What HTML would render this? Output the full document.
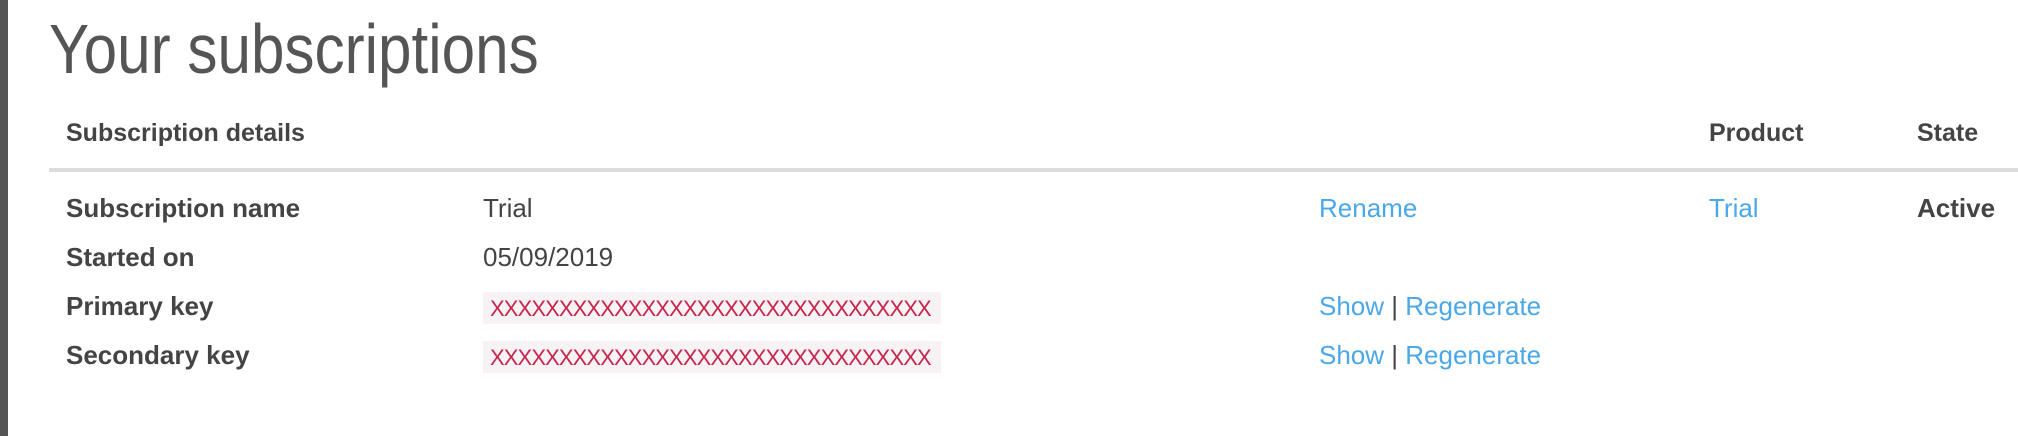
<!DOCTYPE html>
<html><head><meta charset="utf-8"><style>
html,body{margin:0;padding:0;}
body{width:2018px;height:436px;background:#fff;position:relative;overflow:hidden;font-family:"Liberation Sans",sans-serif;color:#444;}
.bar{position:absolute;left:0;top:0;width:8px;height:436px;background:#555;}
.t{position:absolute;white-space:nowrap;line-height:1;}
.title{left:49px;top:14px;font-size:70px;color:#555;transform:scaleX(0.86);transform-origin:0 0;}
.h{font-size:25px;font-weight:bold;color:#444;}
.l{font-size:26px;font-weight:bold;color:#444;}
.v{font-size:26px;color:#444;}
.a{font-size:26px;color:#4aa8e8;}
.line{position:absolute;left:49px;right:0;top:168px;height:4px;background:#ddd;}
.key{position:absolute;left:483px;width:458px;height:32px;background:#f7f2f3;}
.kt{position:absolute;left:490px;font-size:22px;color:#c7254e;letter-spacing:-0.9px;white-space:nowrap;line-height:1;}
.sep{color:#444;}
</style></head><body>
<div class="bar"></div>
<div class="t title">Your subscriptions</div>
<div class="t h" style="left:66px;top:121px">Subscription details</div>
<div class="t h" style="left:1709px;top:121px">Product</div>
<div class="t h" style="left:1917px;top:121px">State</div>
<div class="line"></div>

<div class="t l" style="left:66px;top:195px">Subscription name</div>
<div class="t v" style="left:483px;top:195px">Trial</div>
<div class="t a" style="left:1319px;top:195px">Rename</div>
<div class="t a" style="left:1709px;top:195px">Trial</div>
<div class="t l" style="left:1917px;top:195px">Active</div>

<div class="t l" style="left:66px;top:244px">Started on</div>
<div class="t v" style="left:483px;top:244px">05/09/2019</div>

<div class="key" style="top:292px"></div>
<div class="t l" style="left:66px;top:293px">Primary key</div>
<div class="kt" style="top:298px">XXXXXXXXXXXXXXXXXXXXXXXXXXXXXXXX</div>
<div class="t a" style="left:1319px;top:293px">Show <span class="sep">|</span> Regenerate</div>

<div class="key" style="top:341px"></div>
<div class="t l" style="left:66px;top:342px">Secondary key</div>
<div class="kt" style="top:347px">XXXXXXXXXXXXXXXXXXXXXXXXXXXXXXXX</div>
<div class="t a" style="left:1319px;top:342px">Show <span class="sep">|</span> Regenerate</div>
</body></html>
